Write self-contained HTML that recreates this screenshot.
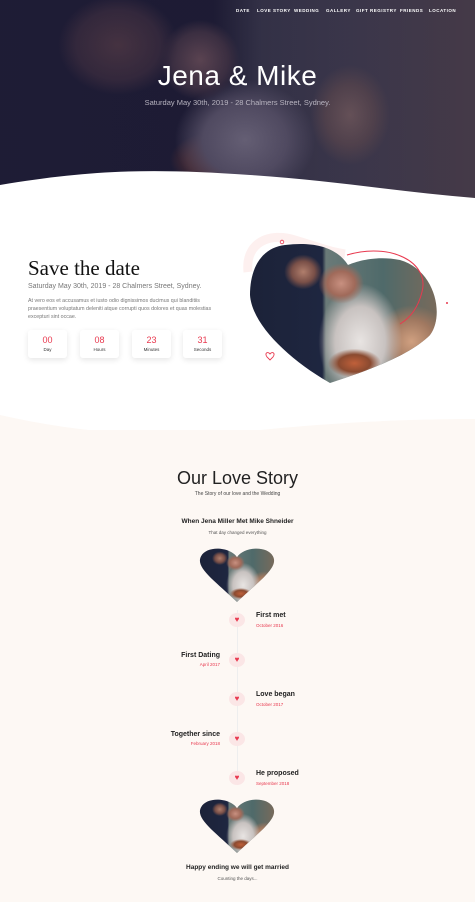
<!DOCTYPE html>
<html><head><meta charset="utf-8"><style>
*{margin:0;padding:0;box-sizing:border-box}
body{width:475px;height:902px;overflow:hidden;background:#fdf8f4;font-family:"Liberation Sans",sans-serif;position:relative}
.abs{position:absolute}
.photo{background:
radial-gradient(ellipse 14% 10% at 55% 85%,#c0603a 0%,#8a4a30 60%,transparent 100%),
radial-gradient(ellipse 12% 14% at 48% 30%,#c89080 0%,#a06a5a 60%,transparent 100%),
radial-gradient(ellipse 10% 12% at 28% 22%,#b07e6c 0%,#7a5048 60%,transparent 100%),
radial-gradient(ellipse 22% 40% at 58% 70%,#e8e4e2 0%,#c8c2c0 60%,transparent 100%),
radial-gradient(ellipse 20% 25% at 85% 70%,#d0a080 0%,#a07860 60%,transparent 100%),
linear-gradient(90deg,#1c2238 0%,#1e2640 38%,#6a7a78 40%,#4f6a6a 70%,#7a6a5a 100%)}
.hero{left:0;top:0;width:475px;height:200px;background:
linear-gradient(rgba(30,24,52,.35),rgba(30,24,52,.35)),
radial-gradient(ellipse 60px 50px at 118px 45px,#5a4048 0%,#3e3040 70%,transparent 100%),
radial-gradient(ellipse 40px 40px at 200px 60px,#7a5a60 0%,#4a3a48 70%,transparent 100%),
radial-gradient(ellipse 70px 60px at 245px 140px,#8a8496 0%,#6a6478 60%,transparent 100%),
radial-gradient(ellipse 45px 28px at 215px 160px,#7a4038 0%,#5a3434 60%,transparent 100%),
radial-gradient(ellipse 40px 50px at 350px 115px,#8a6e6a 0%,#6a5658 60%,transparent 100%),
linear-gradient(90deg,#1e1e36 0%,#1d1d34 45%,#3e3e50 55%,#4a4656 75%,#5a4c52 100%)}
.nav{top:8px;font-size:4.5px;color:#fff;letter-spacing:.5px;font-weight:bold}
.cd{top:330px;width:39px;height:28px;background:#fff;border-radius:3px;box-shadow:0 2px 6px rgba(0,0,0,.1);text-align:center}
.cd b{display:block;color:#e8394f;font-weight:normal;font-size:9px;margin-top:5px}
.cd i{display:block;font-style:normal;font-size:4.5px;color:#333;margin-top:2px}
.hb{width:16px;height:14px;border-radius:50%;background:#fbe6e6;left:229px}
.hb::after{content:"♥";position:absolute;left:0;width:16px;text-align:center;top:1px;font-size:8px;color:#e8394f;line-height:12px}
.t{font-size:7px;color:#222;font-weight:bold}
.d{font-size:4.5px;color:#e8394f}
</style></head><body>
<svg width="0" height="0" style="position:absolute"><defs>
<clipPath id="heart" clipPathUnits="objectBoundingBox"><path d="M.5,.2 C.42,.02 .12,-.02 .04,.18 C-.04,.38 .2,.6 .5,1 C.8,.6 1.04,.38 .96,.18 C.88,-.02 .58,.02 .5,.2Z"/></clipPath>
<clipPath id="bigh"><path d="M98,25 C85,5 60,2 35,5 C10,8 0,30 0,55 C2,85 40,120 80,143 C120,130 160,115 180,95 C195,75 185,30 150,20 C125,15 105,22 98,25Z"/></clipPath>
</defs></svg>

<div class="abs hero"></div>
<svg class="abs" style="left:0;top:150px" width="475" height="60"><path d="M0,35 C90,20 150,18 250,25 C330,30 400,42 475,48 L475,60 L0,60Z" fill="#fff"/></svg>
<div class="abs nav" style="left:236px">DATE</div>
<div class="abs nav" style="left:257px">LOVE STORY</div>
<div class="abs nav" style="left:294px">WEDDING</div>
<div class="abs nav" style="left:326px">GALLERY</div>
<div class="abs nav" style="left:356px">GIFT REGISTRY</div>
<div class="abs nav" style="left:400px">FRIENDS</div>
<div class="abs nav" style="left:429px">LOCATION</div>
<div class="abs" style="left:0;width:475px;top:60px;text-align:center;color:#fff;font-size:28px;font-weight:300;letter-spacing:.5px">Jena &amp; Mike</div>
<div class="abs" style="left:0;width:475px;top:98px;text-align:center;color:#b8b4c0;font-size:7.5px">Saturday May 30th, 2019 - 28 Chalmers Street, Sydney.</div>

<div class="abs" style="left:0;top:200px;width:475px;height:230px;background:#fff"></div>
<svg class="abs" style="left:0;top:405px" width="475" height="40"><path d="M0,10 C80,28 160,35 260,25 C350,16 420,14 475,14 L475,40 L0,40Z" fill="#fdf8f4"/></svg>
<div class="abs" style="left:28px;top:256px;font-family:'Liberation Serif',serif;font-size:21px;color:#111">Save the date</div>
<div class="abs" style="left:28px;top:283px;font-size:7px;color:#777">Saturday May 30th, 2019 - 28 Chalmers Street, Sydney.</div>
<div class="abs" style="left:28px;top:297px;width:185px;font-size:5.3px;line-height:8.2px;color:#777">At vero eos et accusamus et iusto odio dignissimos ducimus qui blanditiis praesentium voluptatum deleniti atque corrupti quos dolores et quas molestias excepturi sint occae.</div>
<div class="abs cd" style="left:28px"><b>00</b><i>Day</i></div>
<div class="abs cd" style="left:80px"><b>08</b><i>Hours</i></div>
<div class="abs cd" style="left:132px"><b>23</b><i>Minutes</i></div>
<div class="abs cd" style="left:183px"><b>31</b><i>Seconds</i></div>
<svg class="abs" style="left:240px;top:232px" width="210" height="160">
<path d="M8,40 C5,10 30,0 55,8 C75,14 90,20 105,22" stroke="#fdf0ef" stroke-width="9" fill="none"/>
<circle cx="42" cy="10" r="1.8" fill="none" stroke="#e8394f" stroke-width=".8"/>
<path d="M30,122 c2,-3 6,-1 3,3 l-3,3 l-3,-3 c-3,-4 1,-6 3,-3z" fill="none" stroke="#e8394f" stroke-width=".9"/>
<circle cx="207" cy="71" r="1" fill="#e8394f"/>
</svg>
<div class="abs photo" style="left:250px;top:240px;width:190px;height:145px;clip-path:url(#bigh)"></div>
<svg class="abs" style="left:240px;top:232px" width="210" height="160"><path d="M107,23 C150,10 190,30 182,60 C178,76 170,86 160,92" stroke="#e8394f" stroke-width="1" fill="none"/></svg>

<div class="abs" style="left:0;width:475px;top:468px;text-align:center;font-size:18px;color:#222;font-weight:300">Our Love Story</div>
<div class="abs" style="left:0;width:475px;top:491px;text-align:center;font-size:5px;color:#444">The Story of our love and the Wedding</div>
<div class="abs" style="left:0;width:475px;top:518px;text-align:center;font-size:6.5px;color:#222;font-weight:bold">When Jena Miller Met Mike Shneider</div>
<div class="abs" style="left:0;width:475px;top:530px;text-align:center;font-size:4.5px;color:#555">That day changed everything</div>
<div class="abs photo" style="left:198px;top:546px;width:78px;height:56px;clip-path:url(#heart)"></div>
<div class="abs" style="left:237px;top:610px;width:1px;height:175px;background:#eee"></div>
<div class="abs hb" style="top:613px"></div><div class="abs t" style="left:256px;top:612px">First met</div><div class="abs d" style="left:256px;top:623px">October 2016</div>
<div class="abs hb" style="top:653px"></div><div class="abs t" style="left:150px;width:70px;text-align:right;top:652px">First Dating</div><div class="abs d" style="left:150px;width:70px;text-align:right;top:662px">April 2017</div>
<div class="abs hb" style="top:692px"></div><div class="abs t" style="left:256px;top:691px">Love began</div><div class="abs d" style="left:256px;top:702px">October 2017</div>
<div class="abs hb" style="top:732px"></div><div class="abs t" style="left:150px;width:70px;text-align:right;top:731px">Together since</div><div class="abs d" style="left:150px;width:70px;text-align:right;top:741px">February 2018</div>
<div class="abs hb" style="top:771px"></div><div class="abs t" style="left:256px;top:770px">He proposed</div><div class="abs d" style="left:256px;top:781px">September 2018</div>
<div class="abs photo" style="left:198px;top:797px;width:78px;height:56px;clip-path:url(#heart)"></div>
<div class="abs" style="left:0;width:475px;top:864px;text-align:center;font-size:6.5px;color:#222;font-weight:bold">Happy ending we will get married</div>
<div class="abs" style="left:0;width:475px;top:876px;text-align:center;font-size:4.5px;color:#555">Counting the days...</div>
</body></html>
